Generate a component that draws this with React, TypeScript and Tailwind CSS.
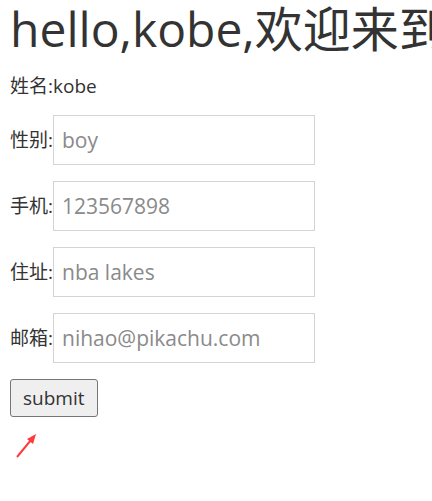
import React from "react"

const fields = [
  { label: "性别:", placeholder: "boy" },
  { label: "手机:", placeholder: "123567898" },
  { label: "住址:", placeholder: "nba lakes" },
  { label: "邮箱:", placeholder: "nihao@pikachu.com" },
]

const font = { fontFamily: '"Open Sans", "Noto Sans CJK SC", sans-serif' }

export default function App() {
  return (
    <div
      className="w-[432px] h-[501px] overflow-hidden bg-white text-[#333] px-[10px]"
      style={font}
    >
      <h1 className="whitespace-nowrap text-[48px] leading-[52px] pt-[3px]">hello,kobe,欢迎来到pikachu</h1>
      <p className="text-[19px] leading-[24px] mt-[19px]">姓名:kobe</p>
      <form className="flex flex-col gap-[16px] mt-[17px]">
        {fields.map((f, i) => (
          <div className="flex items-center" key={i}>
            <span className="text-[19px]">{f.label}</span>
            <input
              placeholder={f.placeholder}
              className="w-[262px] h-[50px] border border-[#d4d4d4] px-[8px] text-[21px] placeholder:text-[#8a8a8a] outline-none"
              type="text"
            />
          </div>
        ))}
        <div>
          <button
            type="button"
            className="h-[38px] px-[12px] text-[19px] bg-[#efefef] border border-[#767676] rounded-[3px] text-[#333]"
          >
            submit
          </button>
        </div>
      </form>
      <svg width="40" height="40" viewBox="0 0 40 40" className="mt-[14px] ml-[4px]">
        <line x1="3" y1="26" x2="17" y2="9" stroke="#ff3b3b" strokeWidth="2" />
        <polygon points="22,3 19,13 13,8" fill="#ff3b3b" />
      </svg>
    </div>
  )
}
